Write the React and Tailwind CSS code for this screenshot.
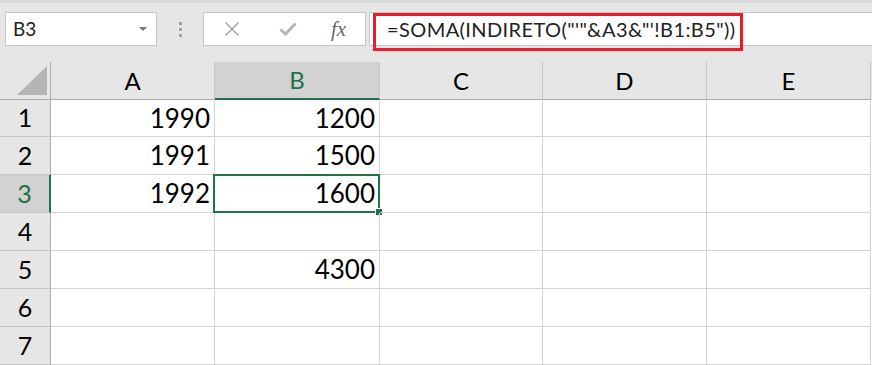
import React from "react";

const cols = ["A", "B", "C", "D", "E"];
const colWidths = ["w-[164px]", "w-[165px]", "w-[163px]", "w-[164px]", "w-[164px]"];

const rows = [
  { n: 1, h: "h-[37px]", cells: ["1990", "1200", "", "", ""] },
  { n: 2, h: "h-[38px]", cells: ["1991", "1500", "", "", ""] },
  { n: 3, h: "h-[38px]", cells: ["1992", "1600", "", "", ""] },
  { n: 4, h: "h-[38px]", cells: ["", "", "", "", ""] },
  { n: 5, h: "h-[38px]", cells: ["", "4300", "", "", ""] },
  { n: 6, h: "h-[38px]", cells: ["", "", "", "", ""] },
  { n: 7, h: "h-[38px]", cells: ["", "", "", "", ""] },
];

const Toolbar = () => {
  return (
    <div className="relative h-[62px] bg-[#e6e6e6] border-t-[3px] border-[#dadada] flex items-start pt-[9px]">
      {/* name box */}
      <div className="ml-[5px] w-[152px] h-[34px] bg-white border border-[#c6c6c6] flex items-center justify-between pl-[7px] pr-[9px]">
        <span className="text-[19px] text-[#222]">B3</span>
        <svg width="8" height="5" viewBox="0 0 8 5">
          <polygon points="0,0 8,0 4,4" fill="#7a7a7a" />
        </svg>
      </div>
      {/* dots */}
      <div className="w-[46px] h-[34px] flex flex-col items-center justify-center gap-[3px]">
        <div className="w-[3px] h-[3px] bg-[#a0a0a0]" />
        <div className="w-[3px] h-[3px] bg-[#a0a0a0]" />
        <div className="w-[3px] h-[3px] bg-[#a0a0a0]" />
      </div>
      {/* cancel / enter / fx */}
      <div className="w-[163px] h-[34px] bg-white border border-[#c6c6c6] flex items-center">
        <div className="w-[56px] flex justify-center">
          <svg width="16" height="16" viewBox="0 0 16 16">
            <path d="M1.5 1.5 L14.5 14.5 M14.5 1.5 L1.5 14.5" stroke="#a8a8a8" strokeWidth="1.6" fill="none" />
          </svg>
        </div>
        <div className="w-[56px] flex justify-center">
          <svg width="18" height="14" viewBox="0 0 18 14">
            <path d="M1.5 7.5 L6.5 12 L16.5 1.5" stroke="#b4b4b4" strokeWidth="2.8" fill="none" />
          </svg>
        </div>
        <div className="flex-1 flex justify-center pr-[4px]">
          <span className="font-['Liberation_Serif',serif] italic text-[21px] text-[#6a6a6a] leading-none">
            fx
          </span>
        </div>
      </div>
      {/* formula bar */}
      <div className="ml-[3px] flex-1 h-[34px] bg-white border border-[#c6c6c6] border-r-0 flex items-center pl-[17px]">
        <span className="text-[20px] text-[#222] whitespace-nowrap tracking-[0.4px]">
          =SOMA(INDIRETO("'"&amp;A3&amp;"'!B1:B5"))
        </span>
      </div>
      {/* highlight annotation */}
      <div className="absolute left-[373px] top-[10px] w-[370px] h-[38px] border-[3px] border-[#e81c2a] pointer-events-none" />
    </div>
  );
};

const Sheet = () => {
  return (
    <div className="flex flex-col">
      {/* column header row */}
      <div className="flex h-[38px] bg-[#e6e6e6]">
        <div className="w-[51px] h-full border-r border-b border-[#ababab] flex items-end justify-end pr-[3px] pb-[4px]">
          <svg width="30" height="29" viewBox="0 0 30 29">
            <polygon points="30,0 30,29 0,29" fill="#b5b5b5" />
          </svg>
        </div>
        {cols.map((c, i) => {
          const sel = c === "B";
          return (
            <div
              key={c}
              className={`${colWidths[i]} h-full flex items-center justify-center text-[24px] ${
                sel
                  ? "bg-[#d2d2d2] text-[#217346] border-b-2 border-[#217346] border-r border-r-[#c6c6c6]"
                  : "border-b border-[#ababab] border-r border-r-[#c6c6c6] text-black"
              }`}
            >
              {c}
            </div>
          );
        })}
      </div>
      {rows.map((r) => {
        const sel = r.n === 3;
        return (
          <div key={r.n} className={`flex ${r.h}`}>
            <div
              className={`w-[51px] h-full flex items-center justify-center text-[25px] border-b border-[#c8c8c8] ${
                sel
                  ? "bg-[#d2d2d2] text-[#217346] border-r-2 border-r-[#217346]"
                  : "bg-[#e6e6e6] text-black border-r border-r-[#ababab]"
              }`}
            >
              {r.n}
            </div>
            {r.cells.map((v, i) => {
              const active = sel && i === 1;
              return (
                <div
                  key={i}
                  className={`${colWidths[i]} relative h-full flex items-center justify-end pr-[4px] text-[26px] text-black border-r border-b border-[#d4d4d4]`}
                >
                  {v}
                  {active && (
                    <>
                      <div className="absolute -left-[2px] -top-[1px] -right-[1px] -bottom-[1px] border-2 border-[#217346]" />
                      <div className="absolute -right-[4px] -bottom-[4px] w-[8px] h-[8px] bg-[#217346] border border-white" />
                    </>
                  )}
                </div>
              );
            })}
          </div>
        );
      })}
    </div>
  );
};

export default function App() {
  return (
    <div className="w-[872px] h-[365px] overflow-hidden bg-white font-['Lato','Open_Sans',sans-serif]">
      <Toolbar />
      <Sheet />
    </div>
  );
}
